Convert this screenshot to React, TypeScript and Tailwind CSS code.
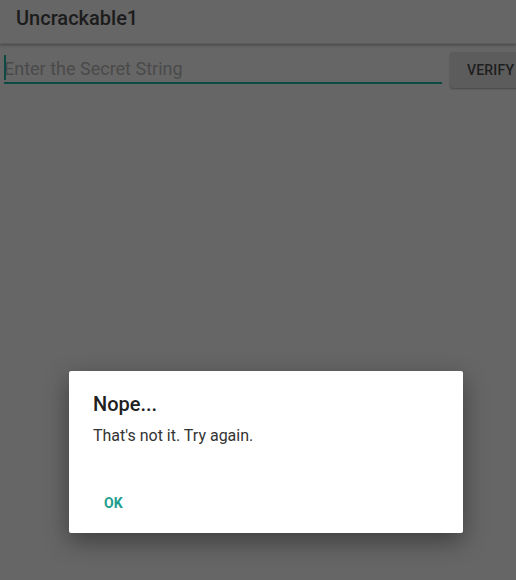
import React from "react";

export default function App() {
  return (
    <div
      className="relative w-[516px] h-[580px] overflow-hidden bg-[#666666]"
      style={{ fontFamily: "Roboto, 'Liberation Sans', sans-serif" }}
    >
      <div className="h-[44px] flex items-start pt-[8px] pl-[16px] bg-[#666666] shadow-[0_1px_3px_rgba(0,0,0,0.35)] border-b border-[#5c5c5c]">
        <span className="text-[20px] font-medium text-[#1c1c1c] leading-[20px]">Uncrackable1</span>
      </div>
      <div className="flex items-start mt-[8px]">
        <div className="relative shrink-0 ml-[4px] w-[438px] h-[32px] border-b-2 border-[#0d4a44] flex items-center">
          <div className="absolute left-0 top-[3px] w-[2px] h-[25px] bg-[#0d4a44]" />
          <span className="text-[18px] text-[#4a4a4a] leading-none mt-[3px]">Enter the Secret String</span>
        </div>
        <div className="shrink-0 ml-[8px] w-[70px] h-[36px] bg-[#5c5c5c] rounded-[3px] shadow-[0_1px_2px_rgba(0,0,0,0.3)] flex items-center pl-[17px]">
          <span className="text-[14px] font-medium text-[#1e1e1e] tracking-[0.2px]">VERIFY</span>
        </div>
      </div>
      <div className="absolute left-[69px] top-[371px] w-[394px] h-[162px] bg-white rounded-[2px] shadow-[0_8px_24px_rgba(0,0,0,0.4)] flex flex-col">
        <div className="pl-[24px] pt-[21px] text-[20px] font-medium text-[#212121] leading-[24px]">Nope...</div>
        <div className="pl-[24px] pt-[10px] text-[16px] text-[#333333] leading-[20px]">That's not it. Try again.</div>
        <div className="pl-[35px] mt-[49px] text-[14px] font-bold text-[#1e9e8e] leading-[16px]">OK</div>
      </div>
    </div>
  );
}
